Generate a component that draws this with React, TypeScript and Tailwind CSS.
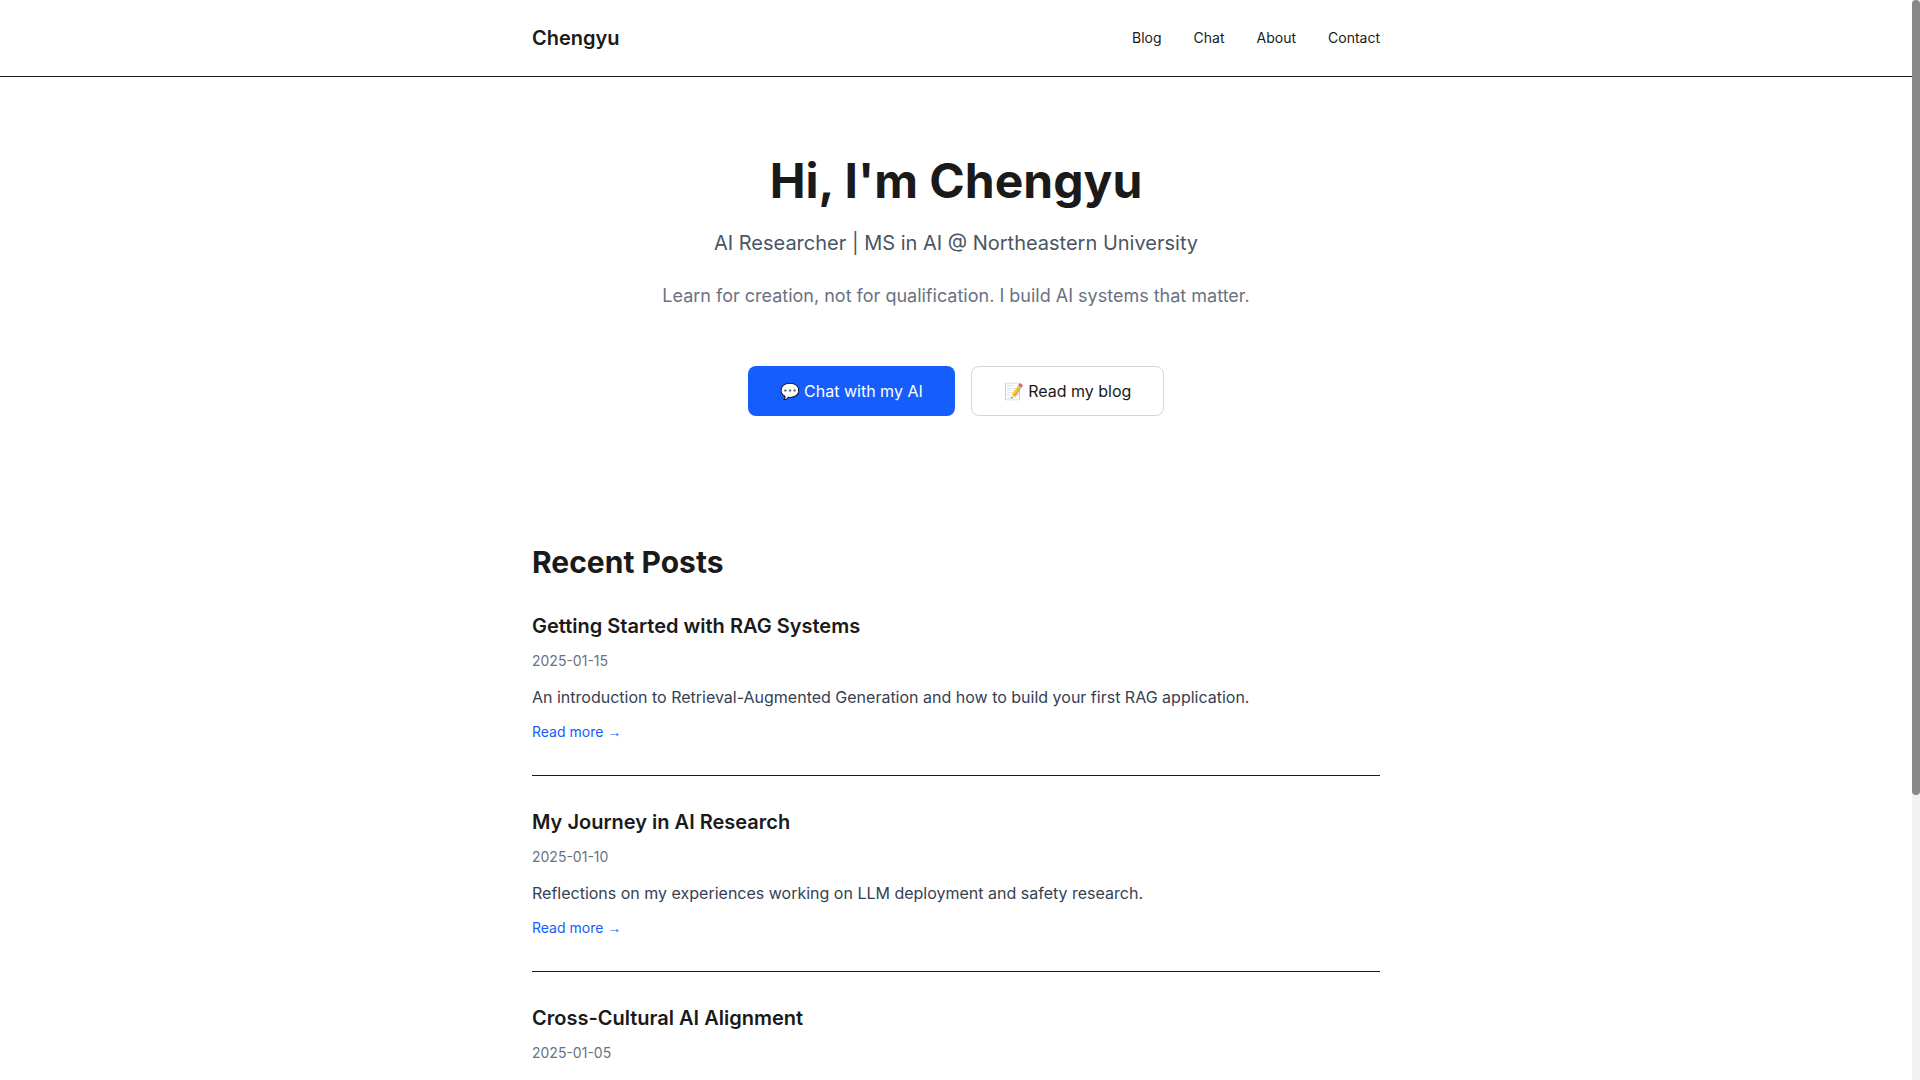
const nav = ["Blog", "Chat", "About", "Contact"];
const posts = [
  { title: "Getting Started with RAG Systems", date: "2025-01-15", text: "An introduction to Retrieval-Augmented Generation and how to build your first RAG application." },
  { title: "My Journey in AI Research", date: "2025-01-10", text: "Reflections on my experiences working on LLM deployment and safety research." },
  { title: "Cross-Cultural AI Alignment", date: "2025-01-05", text: "" },
];

export default function App() {
  return (
    <div className="flex h-screen overflow-hidden bg-white font-['Inter',sans-serif] text-[#1a1a1a]">
      <div className="h-full min-w-0 flex-1 overflow-hidden">
        <header className="border-b border-[#1a1a1a]">
          <nav className="mx-auto flex max-w-4xl items-center justify-between px-6 py-6">
            <a href="#" className="text-xl font-semibold">Chengyu</a>
            <div className="flex gap-8">
              {nav.map((n) => (
                <a key={n} href="#" className="text-sm">{n}</a>
              ))}
            </div>
          </nav>
        </header>
        <main className="mx-auto max-w-4xl px-6">
          <section className="py-20 text-center">
            <h1 className="mb-6 text-5xl font-bold">Hi, I'm Chengyu</h1>
            <p className="mb-6 text-xl text-gray-600">AI Researcher | MS in AI @ Northeastern University</p>
            <p className="mb-14 text-lg leading-[29px] text-gray-500">Learn for creation, not for qualification. I build AI systems that matter.</p>
            <div className="flex justify-center gap-4">
              <a href="#" className="flex items-center rounded-lg bg-blue-600 px-8 py-3 text-white">💬 Chat with my AI</a>
              <a href="#" className="flex items-center rounded-lg border border-gray-300 px-8 py-3">📝 Read my blog</a>
            </div>
          </section>
          <section className="py-12">
            <h2 className="mb-8 text-3xl font-bold">Recent Posts</h2>
            <div className="flex flex-col gap-8">
              {posts.map((p) => (
                <article key={p.title} className="border-b border-[#1a1a1a] pb-8">
                  <h3 className="mb-[11px] text-xl font-semibold">{p.title}</h3>
                  <p className="mb-3 text-sm text-gray-500">{p.date}</p>
                  {p.text && <p className="mb-2 leading-7 text-gray-700">{p.text}</p>}
                  {p.text && (
                    <a href="#" className="text-sm text-blue-600">
                      Read more <span className="font-['Liberation_Sans',sans-serif]">→</span>
                    </a>
                  )}
                </article>
              ))}
            </div>
          </section>
        </main>
      </div>
      <div aria-hidden="true" className="h-full w-2 bg-[#f1f1f1]">
        <div className="h-[73.6%] rounded bg-[#888888]" />
      </div>
    </div>
  );
}
